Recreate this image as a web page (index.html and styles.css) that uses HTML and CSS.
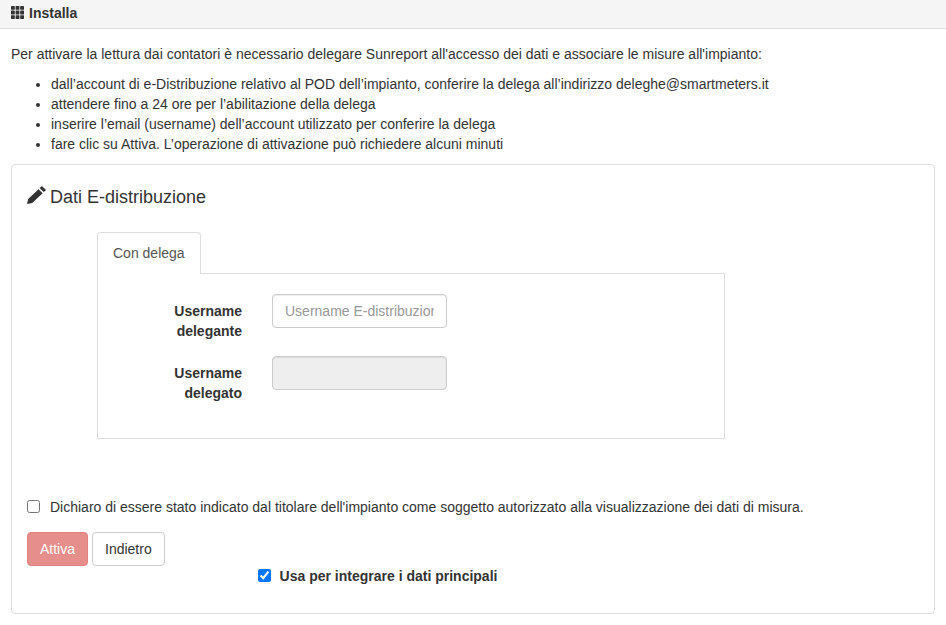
FILE: index.html
```html
<!DOCTYPE html>
<html lang="it">
<head>
<meta charset="utf-8">
<title>Installa</title>
<link rel="stylesheet" href="styles.css">
</head>
<body>
<header class="topbar">
  <svg class="icon-grid" viewBox="0 0 13 13" width="13" height="13" aria-hidden="true">
    <g fill="#333">
      <rect x="0" y="0" width="3.8" height="3.8" rx=".4"/><rect x="4.6" y="0" width="3.8" height="3.8" rx=".4"/><rect x="9.2" y="0" width="3.8" height="3.8" rx=".4"/>
      <rect x="0" y="4.6" width="3.8" height="3.8" rx=".4"/><rect x="4.6" y="4.6" width="3.8" height="3.8" rx=".4"/><rect x="9.2" y="4.6" width="3.8" height="3.8" rx=".4"/>
      <rect x="0" y="9.2" width="3.8" height="3.8" rx=".4"/><rect x="4.6" y="9.2" width="3.8" height="3.8" rx=".4"/><rect x="9.2" y="9.2" width="3.8" height="3.8" rx=".4"/>
    </g>
  </svg>
  <span>Installa</span>
</header>
<main class="content">
  <p class="intro">Per attivare la lettura dai contatori è necessario delegare Sunreport all'accesso dei dati e associare le misure all'impianto:</p>
  <ul class="steps">
    <li>dall’account di e-Distribuzione relativo al POD dell’impianto, conferire la delega all’indirizzo deleghe@smartmeters.it</li>
    <li>attendere fino a 24 ore per l’abilitazione della delega</li>
    <li>inserire l’email (username) dell’account utilizzato per conferire la delega</li>
    <li>fare clic su Attiva. L’operazione di attivazione può richiedere alcuni minuti</li>
  </ul>
  <section class="card">
    <h3 class="card-title">
      <svg class="icon-pencil" viewBox="0 0 19 18" width="19" height="18" aria-hidden="true">
        <path fill="#333" d="M0 18 L1.2 13 L11.5 3.2 L15.6 7.2 L5.2 17 Z M12.6 2.1 L14.4 .4 Q14.9 0 15.4 .4 L18.6 3.4 Q19 3.9 18.6 4.4 L16.7 6.1 Z"/>
      </svg>
      <span>Dati E-distribuzione</span>
    </h3>
    <div class="tabs">
      <div class="tab-strip"><div class="tab">Con delega</div></div>
      <div class="tab-panel">
        <div class="field">
          <label class="field-label" for="delegante">Username delegante</label>
          <input class="field-input" id="delegante" type="text" placeholder="Username E-distribuzione">
        </div>
        <div class="field">
          <label class="field-label" for="delegato">Username delegato</label>
          <input class="field-input" id="delegato" type="text" disabled>
        </div>
      </div>
    </div>
    <label class="declare"><input class="check" type="checkbox"><span>Dichiaro di essere stato indicato dal titolare dell'impianto come soggetto autorizzato alla visualizzazione dei dati di misura.</span></label>
    <div class="actions">
      <button class="btn btn-danger" type="button" disabled>Attiva</button>
      <button class="btn btn-default" type="button">Indietro</button>
    </div>
    <label class="primary"><input class="check" type="checkbox" checked><span>Usa per integrare i dati principali</span></label>
  </section>
</main>
</body>
</html>
```

FILE: styles.css
```css
* { box-sizing: border-box; }
html, body { margin: 0; padding: 0; }
body {
  font-family: "Liberation Sans", Arial, sans-serif;
  font-size: 14px;
  line-height: 20px;
  color: #333;
  background: #fff;
}
.topbar {
  height: 29px;
  padding: 3px 11px 0;
  background: #f5f5f5;
  border-bottom: 1px solid #ddd;
  display: flex;
  align-items: flex-start;
  gap: 5px;
  font-weight: 700;
}
.icon-grid { margin-top: 3px; flex: none; }
.content { padding: 15px 11px 0; }
.intro { margin: 0; }
.steps { margin: 10px 0 10px; padding: 0 0 0 40px; }
.card {
  height: 450px;
  border: 1px solid #ddd;
  border-radius: 4px;
  padding: 0 15px;
}
.card-title {
  margin: 0;
  padding-top: 20px;
  height: 67px;
  font-size: 18px;
  font-weight: 400;
  line-height: 24px;
  display: flex;
  align-items: flex-start;
  gap: 4px;
}
.icon-pencil { margin-top: 1px; flex: none; }
.tabs { margin-left: 70px; width: 628px; }
.tab-strip { display: flex; height: 42px; }
.tab {
  height: 42px;
  padding: 10px 15px;
  border: 1px solid #ddd;
  border-bottom: 0;
  border-radius: 4px 4px 0 0;
  color: #555;
  background: #fff;
  position: relative;
  z-index: 1;
}
.tab-panel {
  margin-top: -1px;
  height: 166px;
  border: 1px solid #ddd;
  padding-top: 20px;
}
.field { display: flex; align-items: flex-start; margin-bottom: 15px; }
.field-label {
  width: 144px;
  margin-right: 30px;
  padding: 7px 0 0 70px;
  text-align: right;
  font-weight: 700;
}
.field-input {
  width: 175px;
  height: 34px;
  padding: 6px 12px;
  font: inherit;
  color: #555;
  background: #fff;
  border: 1px solid #ccc;
  border-radius: 4px;
  box-shadow: inset 0 1px 1px rgba(0,0,0,.075);
}
.field-input::placeholder { color: #999; opacity: 1; }
.field-input:disabled { background: #eee; }
.check { margin: 0; width: 13px; height: 13px; flex: none; }
.declare {
  display: flex;
  align-items: flex-start;
  margin-top: 58px;
  gap: 10px;
}
.declare .check { margin-top: 3px; }
.actions { display: flex; gap: 4px; margin-top: 15px; }
.btn {
  height: 34px;
  padding: 6px 12px;
  font: inherit;
  border: 1px solid #ccc;
  border-radius: 4px;
  color: #333;
  background: #fff;
}
.btn-danger {
  color: #fff;
  background: #d9534f;
  border-color: #d43f3a;
  opacity: .65;
}
.primary {
  display: flex;
  align-items: flex-start;
  gap: 8.6px;
  margin: 0 0 0 231px;
  font-weight: 700;
}
.primary .check { margin-top: 3px; }
```
